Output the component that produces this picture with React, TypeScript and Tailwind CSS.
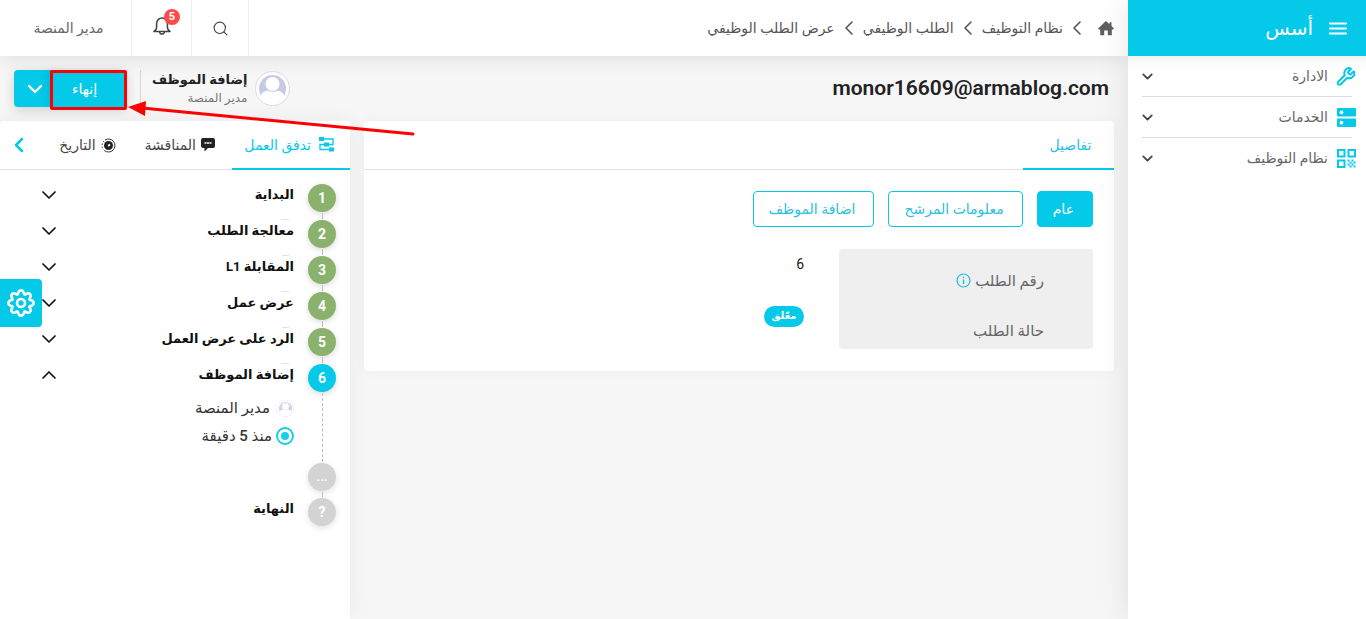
import { useState } from 'react';
import { ChevronDown, ChevronLeft, ChevronUp, Search, Wrench } from 'lucide-react';

const crumbs = ['نظام التوظيف', 'الطلب الوظيفي', 'عرض الطلب الوظيفي'];

const steps = ['البداية', 'معالجة الطلب', 'المقابلة L1', 'عرض عمل', 'الرد على عرض العمل', 'إضافة الموظف'];

const sections = ['عام', 'معلومات المرشح', 'اضافة الموظف'];

// wavy outline with eight lobes
const gearPoints = Array.from({ length: 144 }, (_, i) => {
  const t = (i / 144) * Math.PI * 2;
  const r = 11.2 + 1.7 * Math.cos(8 * t) - 0.3 * Math.cos(16 * t);
  return `${(15 + r * Math.cos(t)).toFixed(2)},${(15 + r * Math.sin(t)).toFixed(2)}`;
}).join(' ');

function GearIcon() {
  return (
    <svg width="30" height="30" viewBox="0 0 30 30" fill="none" stroke="#fff" strokeWidth="2.6" strokeLinejoin="round">
      <polygon points={gearPoints} />
      <circle cx="15" cy="15" r="4" />
    </svg>
  );
}

function MenuIcon() {
  return (
    <svg width="18" height="13" viewBox="0 0 18 13" stroke="#fff" strokeWidth="2" strokeLinecap="round">
      <path d="M1 1.500h16M1 6.500h16M1 11.500h16" />
    </svg>
  );
}

function BellIcon() {
  return (
    <svg width="18" height="18" viewBox="0 0 18 18" fill="none" stroke="#444" strokeWidth="1.500" strokeLinejoin="round">
      <path d="M1 14.500h16c-1.700-1-2.600-2.400-2.600-4.500V6.800C14.400 3.400 12.200 1 9 1S3.600 3.400 3.600 6.800V10c0 2.100-.9 3.500-2.600 4.500z" />
      <path d="M6.500 14.800c.3 1.500 1.200 2.200 2.500 2.200s2.200-.7 2.500-2.200" />
    </svg>
  );
}

function ServerIcon() {
  return (
    <svg width="19" height="19" viewBox="0 0 19 19">
      <rect width="19" height="8.500" rx="1" fill="#04c9e8" />
      <rect y="10.500" width="19" height="8.500" rx="1" fill="#04c9e8" />
      <circle cx="4.500" cy="4.300" r="1.900" fill="#fff" />
      <circle cx="4.500" cy="14.700" r="1.900" fill="#fff" />
    </svg>
  );
}

function QrIcon() {
  return (
    <svg width="19" height="19" viewBox="0 0 19 19" fill="#04c9e8">
      <g fill="none" stroke="#04c9e8" strokeWidth="2">
        <rect x="1" y="1" width="6.5" height="6.5" />
        <rect x="11.5" y="1" width="6.5" height="6.5" />
        <rect x="1" y="11.5" width="6.5" height="6.5" />
      </g>
      <path d="M10.5 10.5h2v2h-2zM14.5 10.5h2v2h-2zM12.5 12.5h2v2h-2zM16.5 12.5h2v2h-2zM10.5 14.5h2v2h-2zM14.5 14.5h2v2h-2zM12.5 16.5h2v2h-2zM16.5 16.5h2v2h-2z" />
    </svg>
  );
}

function HomeIcon() {
  return (
    <svg width="16" height="15" viewBox="0 0 16 15" fill="#5f5f5f">
      <path d="M8 0 11.5 3.2V1.2h2v3.9L16 7.6 15 8.6H13.8V14.2H9.8V9.5H6.2V14.2H2.2V8.6H0.8L0 7.6z" />
    </svg>
  );
}

function FlowIcon() {
  return (
    <svg width="15" height="15" viewBox="0 0 15 15" fill="#04c9e8">
      <rect width="5" height="4" />
      <rect x="5" y="5.5" width="5" height="4" />
      <rect x="10" y="10.5" width="5" height="4" />
      <path d="M5 2h9v5.5h-4M5 7.5H1v5h9" fill="none" stroke="#04c9e8" strokeWidth="1.3" />
    </svg>
  );
}

function CommentIcon() {
  return (
    <svg width="14" height="14" viewBox="0 0 14 14">
      <path d="M2 0h10a2 2 0 0 1 2 2v6a2 2 0 0 1-2 2H7l-3.5 3.5V10H2a2 2 0 0 1-2-2V2a2 2 0 0 1 2-2z" fill="#222" />
      <path d="M3.5 4.2h2v1.6h-2zM6 4.2h2v1.6H6zM8.5 4.2h2v1.6h-2z" fill="#fff" />
    </svg>
  );
}

function HistoryIcon() {
  return (
    <svg width="15" height="15" viewBox="0 0 15 15">
      <path d="M4 2A6.500 6.500 0 1 1 3.200 12.400" fill="none" stroke="#333" />
      <path d="M3 3A6.500 6.500 0 0 0 2.500 11.700" fill="none" stroke="#333" strokeDasharray="1.5 1.5" />
      <circle cx="7.5" cy="7.5" r="4.5" fill="#222" />
      <path d="M7.200 8 8.900 6.300" stroke="#fff" strokeWidth="1.8" />
    </svg>
  );
}

function Avatar({ className }: { className: string }) {
  return (
    <svg className={className} viewBox="0 0 35 35">
      <circle cx="17.5" cy="17.5" r="17" fill="#fff" stroke="#dcdcdf" />
      <circle cx="17.5" cy="17.5" r="13.5" fill="#c7cbe2" />
      <circle cx="17.5" cy="13" r="7" fill="#fff" />
      <path d="M5.500 26c.5-4 4-6.300 7-6.300 2 1.300 8 1.300 10 0 3 0 6.500 2.300 7 6.300-2 4.500-7 6.300-12 6.300S7.500 30.500 5.500 26z" fill="#fff" />
    </svg>
  );
}

function Sidebar() {
  const items = [
    { label: 'الادارة', icon: <Wrench size={21} strokeWidth={2.4} color="#04c9e8" /> },
    { label: 'الخدمات', icon: <ServerIcon /> },
    { label: 'نظام التوظيف', icon: <QrIcon /> },
  ];
  return (
    <aside className="relative z-10 w-[238px] shrink-0 bg-white shadow-[0_0_28px_rgba(0,0,0,0.1)]">
      <div className="flex h-14 items-center gap-4 bg-[#04c9e8] pr-[19px] text-white">
        <button type="button" aria-label="القائمة"><MenuIcon /></button>
        <span className="text-xl">أسس</span>
      </div>
      <ul className="px-[14px] shadow-[inset_0_14px_14px_-12px_rgba(0,0,0,0.08)]">
        {items.map((item, i) => (
          <li key={item.label} className={i < 2 ? 'border-b border-[#dcdcdc]' : ''}>
            <a href="#" className="-mr-1 flex h-10 items-center text-sm text-[#666]">
              <span className="flex w-5 justify-center">{item.icon}</span>
              <span className="mr-2 grow">{item.label}</span>
              <ChevronDown size={17} strokeWidth={2.500} color="#444" className="-ml-[3px]" />
            </a>
          </li>
        ))}
      </ul>
    </aside>
  );
}

function Header() {
  return (
    <header className="relative z-[5] flex h-14 items-center justify-between bg-white shadow-[0_2px_20px_rgba(0,0,0,0.1)]">
      <nav className="flex items-center gap-0.5 pr-[14px] text-sm text-[#555]">
        <a href="#" aria-label="الرئيسية" className="ml-[7px]"><HomeIcon /></a>
        {crumbs.map(crumb => (
          <span key={crumb} className="flex items-center gap-0.5">
            <ChevronLeft size={24} strokeWidth={1.6} color="#555" />
            <a href="#">{crumb}</a>
          </span>
        ))}
      </nav>
      <div className="flex h-full text-sm text-[#666]">
        <button type="button" aria-label="بحث" className="flex w-[58px] items-center justify-center border-x border-[#efefef]">
          <Search size={17} strokeWidth={1.6} color="#444" />
        </button>
        <button type="button" aria-label="التنبيهات" className="relative flex w-[60px] items-center justify-center border-l border-[#efefef] pb-1">
          <BellIcon />
          <span className="absolute left-8 top-[9px] flex size-4 items-center justify-center rounded-full bg-[#ff4b4b] text-[11px] font-bold text-white">5</span>
        </button>
        <button type="button" className="w-[131px] pl-[6px]">مدير المنصة</button>
      </div>
    </header>
  );
}

function TitleBar() {
  return (
    <div className="flex h-[65px] items-center justify-between px-[14px]">
      <h1 className="pr-[5px] text-[21px] font-semibold text-[#222]" dir="ltr">monor16609@armablog.com</h1>
      <div className="flex items-center">
        <Avatar className="ml-2 size-[35px]" />
        <div className="text-[#222]">
          <div className="text-[13px] font-bold leading-[18px]">إضافة الموظف</div>
          <div className="text-xs leading-[18px] text-[#777]">مدير المنصة</div>
        </div>
        <div className="mr-[11px] h-[37px] w-px bg-[#d5d5d5]" />
        <div className="relative mr-[13px] flex h-[37px] rounded bg-[#04c9e8] text-sm text-white shadow-[0_3px_12px_rgba(0,0,0,0.15)]">
          <button type="button" className="w-[77px] pr-2 shadow-[-4px_0_8px_rgba(0,0,0,0.06)]">إنهاء</button>
          <button type="button" aria-label="خيارات" className="flex w-9 items-center justify-center pl-[6px]">
            <ChevronDown size={24} strokeWidth={2.4} className="shrink-0" />
          </button>
          <span className="absolute right-0 top-0 h-[40px] w-[77px] rounded-xs border-[3px] border-[#fe0000]" />
        </div>
      </div>
    </div>
  );
}

function Details() {
  const [active, setActive] = useState(0);
  return (
    <section className="grow self-start rounded bg-white shadow-[0_0_14px_rgba(0,0,0,0.04)]">
      <div className="flex h-[49px] border-b border-[#e2e2e2] text-sm">
        <button type="button" className="h-[49px] w-[91px] border-b-2 border-[#04c9e8] pl-1 text-[#2cc0de]">تفاصيل</button>
      </div>
      <div className="px-[21px] pb-[22px] pt-[21px]">
        <div className="flex gap-[14px] text-sm">
          {sections.map((name, i) => (
            <button
              key={name}
              type="button"
              onClick={() => setActive(i)}
              className={`h-9 rounded border border-[#04c9e8] pl-[15px] pr-[18px] ${i === active ? 'bg-[#04c9e8] text-white' : 'text-[#2cc0de]'}`}
            >
              {name}
            </button>
          ))}
        </div>
        <table className="mt-[22px] w-full text-[15px] text-[#222]">
          <tbody>
            <tr className="h-[50px]">
              <th className="w-[254px] rounded-t bg-[#efefef] pb-[7px] pr-[49px] text-right align-bottom font-normal text-[#666]">
                <span className="flex items-center gap-1">
                  رقم الطلب
                  <svg width="15" height="15" viewBox="0 0 15 15" fill="none" stroke="#1fbfe0">
                    <circle cx="7.5" cy="7.5" r="6.500" strokeWidth="1.200" />
                    <path d="M7.500 6.500v4.500M7.500 3.800v1.400" strokeWidth="1.400" />
                  </svg>
                </span>
              </th>
              <td className="pr-[35px] pt-[5px] align-top text-sm">6</td>
            </tr>
            <tr className="h-[50px]">
              <th className="rounded-b bg-[#efefef] pb-[7px] pr-[49px] text-right align-bottom font-normal text-[#666]">حالة الطلب</th>
              <td className="pr-[35px] pt-[7px] align-top">
                <span className="block h-[21px] w-10 rounded-full bg-[#04c9e8] text-center text-[10px] font-bold leading-5 text-white">معّلق</span>
              </td>
            </tr>
          </tbody>
        </table>
      </div>
    </section>
  );
}

function Workflow() {
  return (
    <section className="w-[350px] shrink-0 rounded-t bg-white shadow-[0_0_20px_rgba(0,0,0,0.06)]">
      <div className="flex h-[49px] border-b border-[#e2e2e2] text-sm text-[#444]">
        <button type="button" className="flex h-[49px] w-[118px] items-center gap-2 border-b-2 border-[#04c9e8] pr-4 text-[#04c9e8]">
          <FlowIcon />تدفق العمل
        </button>
        <button type="button" className="mr-[17px] flex items-center gap-[5px]"><CommentIcon />المناقشة</button>
        <button type="button" className="mr-[29px] flex items-center gap-[5px]"><HistoryIcon />التاريخ</button>
        <button type="button" aria-label="المزيد" className="ml-[7px] mr-auto"><ChevronLeft size={24} strokeWidth={2.5} color="#04c9e8" /></button>
      </div>
      <ol className="px-[14px] pt-[14px] text-[13px] font-bold text-[#111]">
        {steps.map((step, i) => {
          const last = i === steps.length - 1;
          return (
            <li key={step} className={last ? 'flex h-[99px]' : 'flex h-9'}>
              <div className="flex w-7 flex-col items-center">
                <span className={`flex size-7 shrink-0 items-center justify-center rounded-full text-sm font-bold text-white shadow-[0_2px_6px_rgba(0,0,0,0.15)] ${last ? 'bg-[#04c9e8]' : 'bg-[#8ab26d]'}`}>{i + 1}</span>
                <span className={`my-px grow border-r border-[#bdbdbd] ${last ? 'border-dashed' : ''}`} />
              </div>
              <div className="mr-[14px] grow">
                <div className="flex h-[22px] items-center justify-between">
                  <span>{step}</span>
                  <button type="button" aria-label={step} className="ml-[23px]">
                    {last ? <ChevronUp size={24} strokeWidth={1.7} /> : <ChevronDown size={24} strokeWidth={1.7} />}
                  </button>
                </div>
                {last ? (
                  <div className="text-[15px] font-medium text-[#333]">
                    <div className="mt-3 flex h-5 items-center gap-[7px]"><Avatar className="size-[17px] opacity-80" />مدير المنصة</div>
                    <div className="mt-2 flex h-5 items-center gap-1">
                      <span className="flex size-[18px] items-center justify-center rounded-full border-2 border-[#18cde9]"><span className="size-2 rounded-full bg-[#18cde9]" /></span>
                      منذ 5 دقيقة
                    </div>
                  </div>
                ) : (
                  <div className="mr-[5px] mt-[13px] h-px w-[7px] bg-[#e2e2e2]" />
                )}
              </div>
            </li>
          );
        })}
        <li className="flex h-[35px]">
          <div className="flex w-7 flex-col items-center">
            <span className="flex size-7 shrink-0 items-center justify-center rounded-full bg-[#d3d3d3] font-medium text-white shadow-[0_2px_6px_rgba(0,0,0,0.12)]">...</span>
            <span className="my-px grow border-r border-dashed border-[#bdbdbd]" />
          </div>
        </li>
        <li className="flex gap-[14px]">
          <span className="flex size-7 items-center justify-center rounded-full bg-[#d3d3d3] text-sm font-bold text-white shadow-[0_2px_6px_rgba(0,0,0,0.12)]">?</span>
          <span className="leading-[22px]">النهاية</span>
        </li>
      </ol>
    </section>
  );
}

export default function App() {
  return (
    <div dir="rtl" className="relative flex min-h-screen bg-[#f6f6f6] font-[Roboto,'DejaVu_Sans',sans-serif]">
      <Sidebar />
      <main className="flex grow flex-col">
        <Header />
        <TitleBar />
        <div className="flex grow gap-[14px] pr-[14px]">
          <Details />
          <Workflow />
        </div>
      </main>
      <button type="button" aria-label="الإعدادات" className="absolute left-0 top-[279px] z-10 flex h-12 w-[42px] items-center justify-center rounded-r bg-[#04c9e8] text-white">
        <GearIcon />
      </button>
      <svg className="pointer-events-none absolute left-[128px] top-[98px] z-10" width="290" height="40" viewBox="0 0 290 40">
        <path d="M14 10 285 36" stroke="#fe0000" strokeWidth="3" strokeLinecap="round" />
        <path d="M0 9 18 3 17 18z" fill="#fe0000" />
      </svg>
    </div>
  );
}
